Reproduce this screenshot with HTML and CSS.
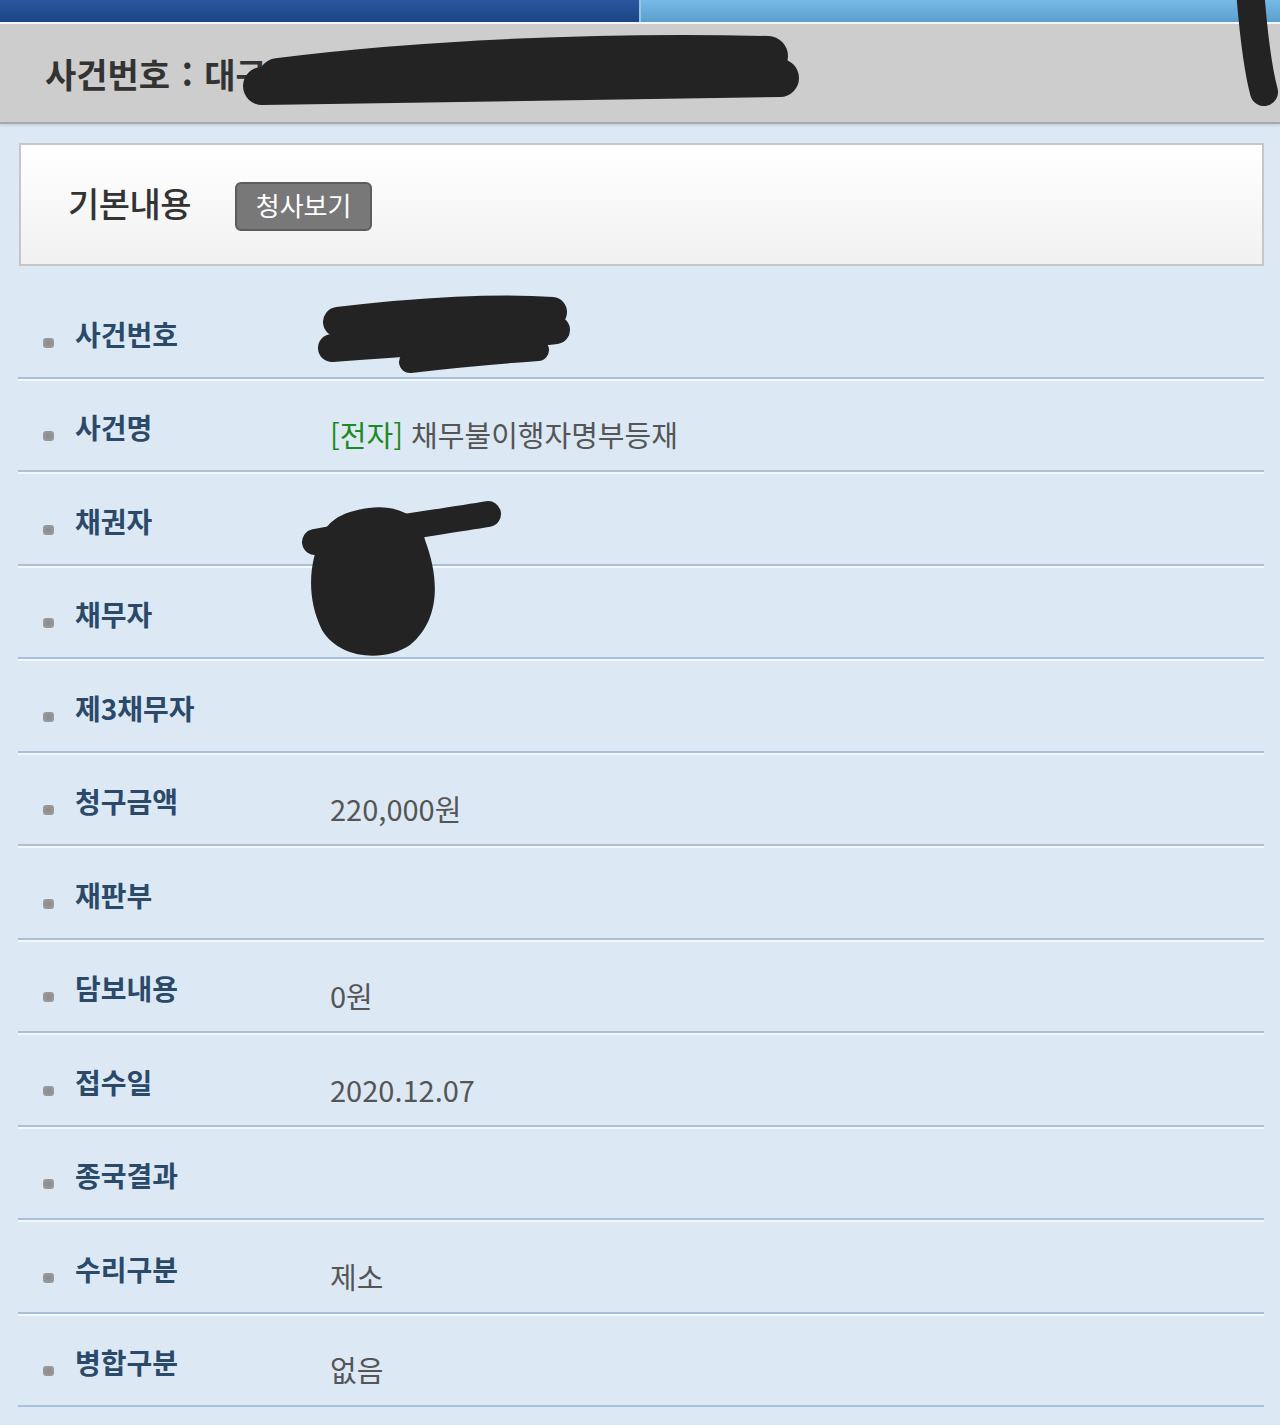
FILE: index.html
```html
<!DOCTYPE html>
<html lang="ko">
<head>
    <meta charset="UTF-8">
    <meta name="viewport" content="width=device-width, initial-scale=1.0">
    <title>사건검색</title>
    <link rel="stylesheet" href="styles.css">
</head>
<body>
    <div class="tabs">
        <div class="tab tab-on"></div>
        <div class="tab tab-off"></div>
    </div>
    <div class="case-bar">
        <h1>사건번호 : 대구</h1>
    </div>

    <div class="section-head">
        <h2>기본내용</h2>
        <button class="btn-view">청사보기</button>
    </div>

    <ul class="info-list">
        <li class="row"><span class="dot"></span><span class="label">사건번호</span><span class="value"></span></li>
        <li class="row"><span class="dot"></span><span class="label">사건명</span><span class="value"><em class="tag">[전자]</em> 채무불이행자명부등재</span></li>
        <li class="row"><span class="dot"></span><span class="label">채권자</span><span class="value"></span></li>
        <li class="row"><span class="dot"></span><span class="label">채무자</span><span class="value"></span></li>
        <li class="row"><span class="dot"></span><span class="label">제3채무자</span><span class="value"></span></li>
        <li class="row"><span class="dot"></span><span class="label">청구금액</span><span class="value">220,000원</span></li>
        <li class="row"><span class="dot"></span><span class="label">재판부</span><span class="value"></span></li>
        <li class="row"><span class="dot"></span><span class="label">담보내용</span><span class="value">0원</span></li>
        <li class="row"><span class="dot"></span><span class="label">접수일</span><span class="value">2020.12.07</span></li>
        <li class="row"><span class="dot"></span><span class="label">종국결과</span><span class="value"></span></li>
        <li class="row"><span class="dot"></span><span class="label">수리구분</span><span class="value">제소</span></li>
        <li class="row"><span class="dot"></span><span class="label">병합구분</span><span class="value">없음</span></li>
    </ul>

    <!-- marker scribbles drawn over the screenshot -->
    <svg class="scribble" width="1280" height="1425" viewBox="0 0 1280 1425">
        <g fill="none" stroke="#232323" stroke-linecap="round">
            <path d="M278 78 C420 60 600 52 768 56" stroke-width="40"/>
            <path d="M262 86 C450 84 620 80 780 78" stroke-width="38"/>
            <path d="M1250 -10 C1254 40 1258 70 1264 92" stroke-width="28"/>
            <path d="M338 322 C420 312 500 308 552 312" stroke-width="30"/>
            <path d="M332 348 C420 342 500 336 556 330" stroke-width="28"/>
            <path d="M410 362 C460 356 510 352 538 350" stroke-width="22"/>
            <path d="M315 542 C380 530 440 522 488 514" stroke-width="26"/>
        </g>
        <g fill="#232323">
            <path d="M350 512 C390 500 420 512 425 540 C440 580 440 620 410 645 C385 662 340 660 322 630 C305 595 310 560 322 535 C328 522 338 516 350 512 Z"/>
        </g>
    </svg>
</body>
</html>
```

FILE: styles.css
```css
* {
  box-sizing: border-box;
}
body {
  margin: 0;
  background-color: #dce9f5;
  font-family: "Noto Sans CJK KR", "Noto Sans", sans-serif;
  position: relative;
}
.tabs {
  display: flex;
  height: 22px;
  border-bottom: 2px solid #f4f6f8;
  box-sizing: content-box;
}
.tab {
  flex: 1;
}
.tab-on {
  background: linear-gradient(#2a58a0, #1a4585);
  border-right: 2px solid #9cc3e4;
}
.tab-off {
  background: linear-gradient(#74bbe6, #5c9fcc);
}
.case-bar {
  height: 100px;
  background-color: #cdcdcd;
  border-bottom: 2px solid #a9a9a9;
  box-shadow: 0 2px 2px rgba(0, 0, 0, 0.1);
  display: flex;
  align-items: center;
  padding-left: 45px;
}
.case-bar h1 {
  margin: 0;
  font-size: 34px;
  font-weight: bold;
  color: #333;
  word-spacing: 2px;
}
.section-head {
  margin: 19px 16px 0 19px;
  height: 123px;
  border: 2px solid #c6c6c6;
  background: linear-gradient(#ffffff, #f1f1f1);
  display: flex;
  align-items: center;
  padding-left: 47px;
  padding-bottom: 4px;
}
.section-head h2 {
  margin: 0;
  font-size: 34px;
  font-weight: 500;
  color: #333;
  letter-spacing: -0.5px;
}
.btn-view {
  margin-left: 44px;
  margin-top: 8px;
  width: 137px;
  height: 49px;
  background-color: #787878;
  border: 2px solid #5c5c5c;
  border-radius: 6px;
  color: white;
  font-family: inherit;
  font-size: 26px;
  padding: 0 0 4px;
}
.info-list {
  list-style: none;
  margin: 19px 16px 0 18px;
  padding: 0;
}
.row {
  height: 93.5px;
  display: flex;
  align-items: center;
  border-bottom: 2px solid #a8c1d8;
  box-shadow: 0 2px 0 #f3f8fc;
  padding-top: 20px;
}
.dot {
  width: 11px;
  height: 10px;
  margin-left: 25px;
  border-radius: 3px;
  background: radial-gradient(#8a8a8a, #a0a0a0);
  margin-top: 4px;
}
.label {
  width: 255px;
  margin-left: 21px;
  font-size: 28px;
  font-weight: bold;
  color: #2b4a6a;
  padding-bottom: 14px;
}
.value {
  font-size: 29px;
  color: #555;
}
.tag {
  font-style: normal;
  color: #1c8a24;
}
.scribble {
  position: absolute;
  top: 0;
  left: 0;
  pointer-events: none;
}
```
